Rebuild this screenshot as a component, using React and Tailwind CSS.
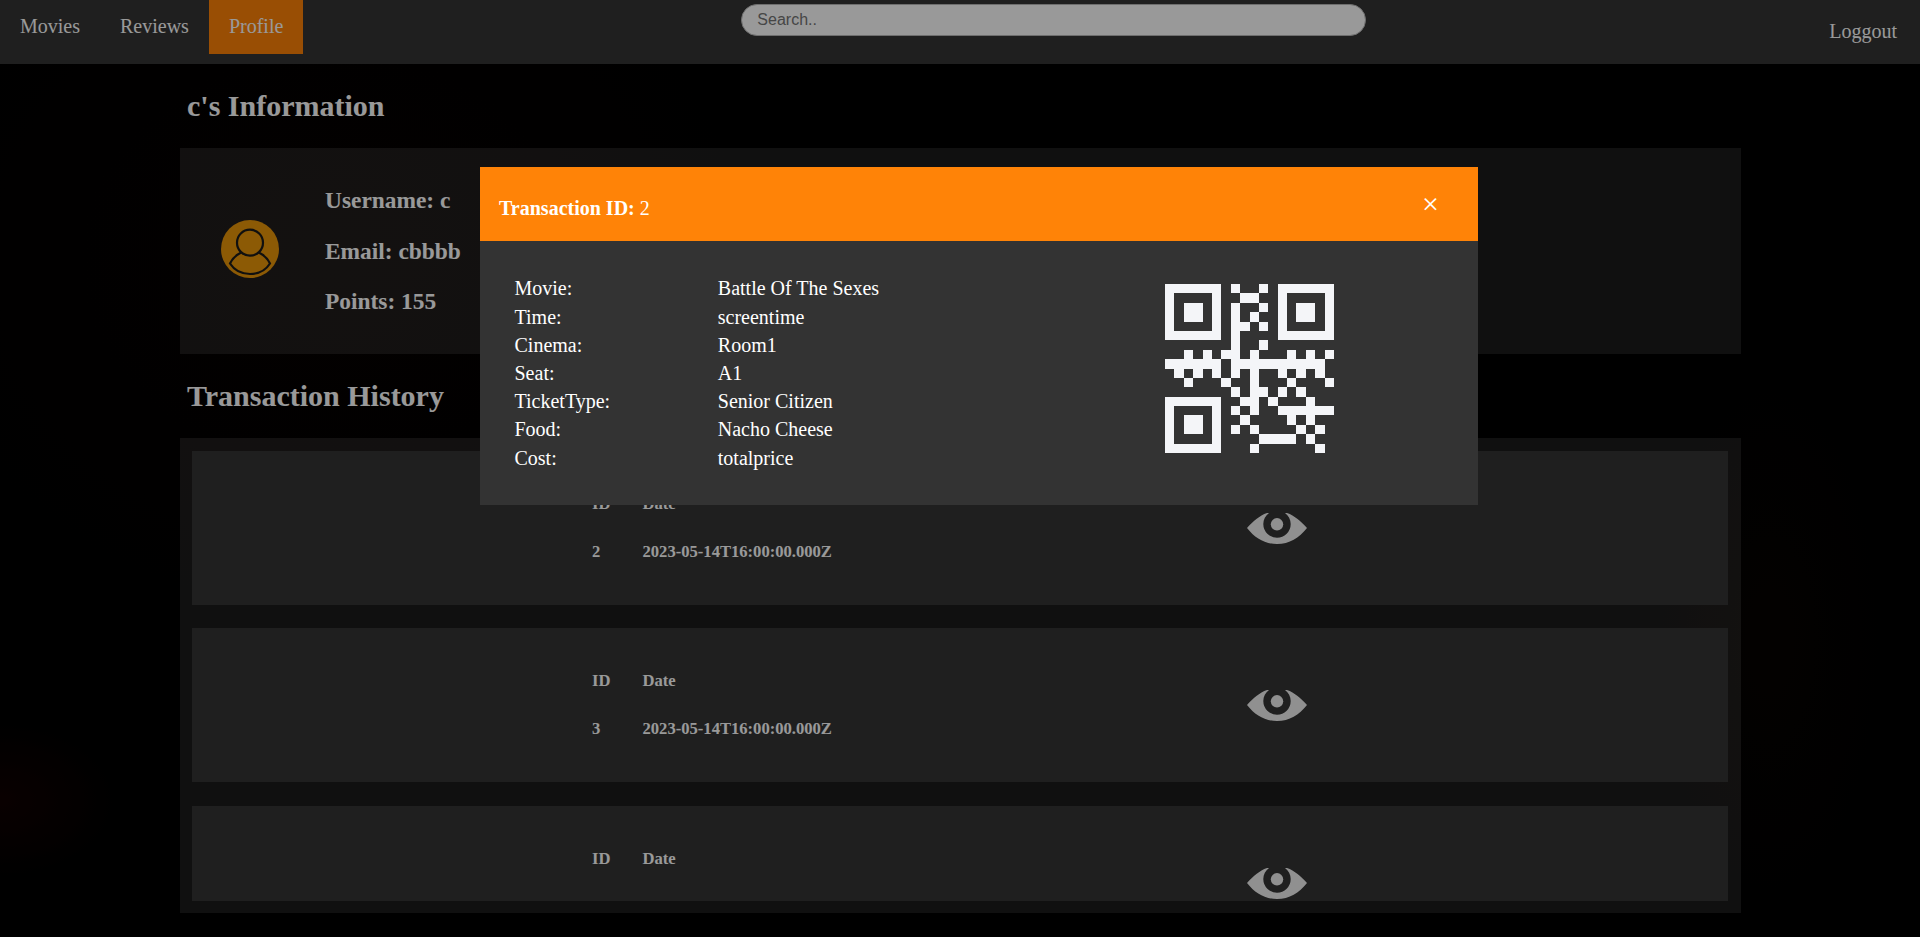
const transactions = [
  { id: 2, date: '2023-05-14T16:00:00.000Z' },
  { id: 3, date: '2023-05-14T16:00:00.000Z' },
  {},
];

const details = [
  ['Movie:', 'Battle Of The Sexes'],
  ['Time:', 'screentime'],
  ['Cinema:', 'Room1'],
  ['Seat:', 'A1'],
  ['TicketType:', 'Senior Citizen'],
  ['Food:', 'Nacho Cheese'],
  ['Cost:', 'totalprice'],
];

const qrRows = [
  '######.#..#.######',
  '#....#..##..#....#',
  '#.##.#.#..#.#.##.#',
  '#.##.#.#.#..#.##.#',
  '#....#.##.#.#....#',
  '######.#....######',
  '.......#..#.......',
  '..#.#.##.#...#.#.#',
  '######.##########.',
  '.#.#.#.#.#..#.#.#.',
  '..#...#..#...#...#',
  '.......#.##.#.#...',
  '######..##.#...#..',
  '#....#.#.#..######',
  '#.##.#..#....#.#..',
  '#.##.#.#.#....#.#.',
  '#....#....####.#..',
  '######...#......#.',
];

function QrCode() {
  const path = qrRows
    .flatMap((row, y) =>
      [...row.matchAll(/#+/g)].map((m) => `M${m.index} ${y}h${m[0].length}v1h-${m[0].length}z`)
    )
    .join('');
  return (
    <svg viewBox="0 0 18 18" className="h-[169px] w-[169px]" shapeRendering="crispEdges">
      <path d={path} fill="#f4f5f8" />
    </svg>
  );
}

function UserIcon() {
  return (
    <svg viewBox="0 0 58 58" className="h-[58px] w-[58px]">
      <circle cx="29" cy="29" r="29" fill="#e99609" />
      <g fill="none" stroke="#1c1b1a" strokeWidth="2.2">
        <circle cx="29" cy="22.700" r="13" />
        <path d="M20.300 32.500C15.500 34.800 11.300 38.500 9 43.500C13.500 50.500 20.500 54 29 54S44.500 50.500 49 43.500C46.700 38.500 42.500 34.800 37.700 32.500" />
      </g>
    </svg>
  );
}

function EyeIcon() {
  return (
    <svg viewBox="0 0 60 32" className="h-8 w-[60px]">
      <path
        fill="#f0f0f0"
        d="M0 15C6 8.500 12.500 2.500 20 0H22C18.500 2.500 16.300 6.500 16.300 11A13.700 13.700 0 0 0 43.700 11C43.700 6.500 41.500 2.500 38 0H40C47.500 2.500 54 8.500 60 15C52 25 42.500 31 30 31S8 25 0 15Z"
      />
      <circle cx="30" cy="11.300" r="6.200" fill="#f0f0f0" />
    </svg>
  );
}

function NavBar() {
  return (
    <nav className="flex h-16 items-start bg-[#343434] text-xl leading-6">
      <a className="h-[54px] px-5 pt-[14px]">Movies</a>
      <a className="h-[54px] px-5 pt-[14px]">Reviews</a>
      <a className="h-[54px] bg-[#ff8307] px-5 pt-[14px]">Profile</a>
      <input
        placeholder="Search.."
        className="mt-1 ml-[438px] h-8 w-[625px] rounded-2xl border border-[#b8b8b8] bg-white px-[15px] pb-px font-['Liberation_Sans',Arial,sans-serif] text-base placeholder:text-[#757575]"
      />
      <a className="ml-auto pt-[19px] pr-[23px]">Loggout</a>
    </nav>
  );
}

function TransactionCard({ id, date }) {
  return (
    <article className="flex h-[154px] shrink-0 bg-[#343434] pt-[43px] pl-[400px] text-[16.6px] leading-[19px] font-bold">
      <div className="flex w-[50.500px] flex-col gap-[29px]">
        <span>ID</span>
        {id && <span>{id}</span>}
      </div>
      <div className="flex w-[604.500px] flex-col gap-[29px]">
        <span>Date</span>
        {date && <span>{date}</span>}
      </div>
      <button className="mt-[19px] self-start">
        <EyeIcon />
      </button>
    </article>
  );
}

function TransactionModal() {
  return (
    <div className="absolute inset-0 bg-black/40 pt-[167px] pl-[480px]">
      <section className="h-[338px] w-[998px] bg-[#333333] text-xl">
        <header className="flex h-[74px] items-start justify-between bg-[#ff8307] pr-[39px] pl-[19px]">
          <p className="pt-[29px] leading-6">
            <b>Transaction ID:</b> 2
          </p>
          <button className="pt-[22px] text-[30px] leading-[30px]">×</button>
        </header>
        <div className="flex pt-[33.400px] pl-[34.500px]">
          <dl className="w-[650.500px]">
            {details.map(([label, value]) => (
              <div key={label} className="flex h-[28.200px] leading-[28.200px]">
                <dt className="w-[203.300px]">{label}</dt>
                <dd>{value}</dd>
              </div>
            ))}
          </dl>
          <div className="pt-[9.600px]">
            <QrCode />
          </div>
        </div>
      </section>
    </div>
  );
}

export default function App() {
  return (
    <div className="relative h-[937px] w-[1920px] overflow-hidden bg-black bg-[radial-gradient(ellipse_120px_80px_at_0px_800px,#100000,transparent),radial-gradient(ellipse_500px_420px_at_330px_260px,#060201,transparent),radial-gradient(ellipse_130px_300px_at_1770px_640px,#060300,transparent)] font-['Liberation_Serif','Times_New_Roman',serif] text-white">
      <NavBar />
      <main className="ml-[180px] w-[1561px]">
        <h2 className="mt-[25px] pl-[7px] text-[30px] leading-[34px] font-bold">c's Information</h2>
        <section className="mt-[25px] flex h-[206px] bg-white/11 pl-[41px]">
          <div className="pt-[72px]">
            <UserIcon />
          </div>
          <div className="flex flex-col gap-[24.500px] pt-[39px] pl-[46px] text-[23.4px] leading-[26px] font-bold">
            <p>Username: c</p>
            <p>Email: cbbbb</p>
            <p>Points: 155</p>
          </div>
        </section>
        <h2 className="mt-[25px] pl-[7px] text-[30px] leading-[34px] font-bold">Transaction History</h2>
        <section className="mt-[25px] h-[475px] bg-white/11 pt-[13px] pr-[13px] pl-3">
          <div className="flex h-[450px] flex-col gap-[23.300px] overflow-hidden">
            {transactions.map((t, i) => (
              <TransactionCard key={i} {...t} />
            ))}
          </div>
        </section>
      </main>
      <TransactionModal />
    </div>
  );
}
